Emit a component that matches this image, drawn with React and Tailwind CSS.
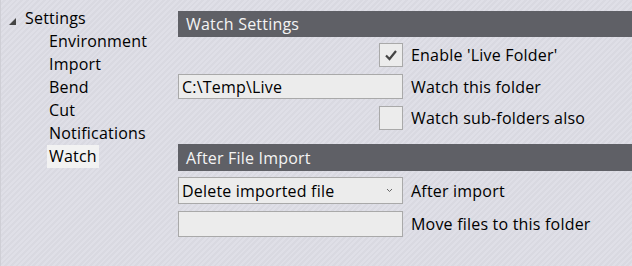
import React, { useState } from "react";

const treeItems = ["Environment", "Import", "Bend", "Cut", "Notifications", "Watch"];

const Checkbox = ({ checked, onToggle }) => (
  <button
    type="button"
    onClick={onToggle}
    className="w-[24px] h-[24px] bg-[#ececec] border border-[#a9a9a9] flex items-center justify-center"
  >
    {checked && (
      <svg width="14" height="12" viewBox="0 0 14 12">
        <path d="M2 6.5 L5.5 10 L12 2" fill="none" stroke="#444" strokeWidth="2.2" />
      </svg>
    )}
  </button>
);

const SectionHeader = ({ title, className = "" }) => (
  <div className={`bg-[#5f6066] text-[#f4f4f4] pl-[8px] flex items-center ${className}`}>
    {title}
  </div>
);

const App = () => {
  const [live, setLive] = useState(true);
  const [subFolders, setSubFolders] = useState(false);
  const [folder, setFolder] = useState("C:\\Temp\\Live");
  const [moveTo, setMoveTo] = useState("");

  return (
    <div
      className="w-[632px] h-[266px] flex text-[16px] tracking-[0.2px] text-black bg-[repeating-linear-gradient(135deg,#dfdfe7_0px,#dfdfe7_2px,#d9d9e1_2px,#d9d9e1_4px)] border-l border-[#cfcfd6]"
      style={{ fontFamily: '"Open Sans", "Noto Sans", sans-serif' }}
    >
      {/* Tree */}
      <div className="w-[177px] pt-[7px] leading-[23px]">
        <div className="flex items-center">
          <svg width="24" height="23" viewBox="0 0 24 23" className="shrink-0">
            <polygon points="15,11 15,18 8,18" fill="#444" />
          </svg>
          <span>Settings</span>
        </div>
        <div className="pl-[46px] flex flex-col items-start">
          {treeItems.map((item) => (
            <span
              key={item}
              className={
                item === "Watch" ? "px-[2px] bg-[#f2f2f2]" : "px-[2px]"
              }
            >
              {item}
            </span>
          ))}
        </div>
      </div>

      {/* Panel */}
      <div className="flex-1 pt-[11px]">
        <SectionHeader title="Watch Settings" className="h-[26px]" />

        <div className="grid grid-cols-[225px_1fr] gap-x-[8px] items-center mt-[6px]">
          <div className="flex justify-end h-[24px]">
            <Checkbox checked={live} onToggle={() => setLive(!live)} />
          </div>
          <span>Enable 'Live Folder'</span>
        </div>

        <div className="grid grid-cols-[225px_1fr] gap-x-[8px] items-center mt-[7px]">
          <input
            value={folder}
            onChange={(e) => setFolder(e.target.value)}
            className="h-[25px] bg-[#ececec] border border-[#a9a9a9] px-[3px] outline-none"
          />
          <span>Watch this folder</span>
        </div>

        <div className="grid grid-cols-[225px_1fr] gap-x-[8px] items-center mt-[7px]">
          <div className="flex justify-end h-[24px]">
            <Checkbox checked={subFolders} onToggle={() => setSubFolders(!subFolders)} />
          </div>
          <span>Watch sub-folders also</span>
        </div>

        <SectionHeader title="After File Import" className="h-[27px] mt-[14px]" />

        <div className="grid grid-cols-[225px_1fr] gap-x-[8px] items-center mt-[6px]">
          <div className="h-[27px] bg-[#ececec] border border-[#a9a9a9] pl-[3px] pr-[9px] flex items-center justify-between">
            <span>Delete imported file</span>
            <svg width="7" height="5" viewBox="0 0 7 5">
              <path d="M1 1 L3.5 3.5 L6 1" fill="none" stroke="#666" strokeWidth="1" />
            </svg>
          </div>
          <span>After import</span>
        </div>

        <div className="grid grid-cols-[225px_1fr] gap-x-[8px] items-center mt-[7px]">
          <input
            value={moveTo}
            onChange={(e) => setMoveTo(e.target.value)}
            className="h-[26px] bg-[#ececec] border border-[#a9a9a9] px-[3px] outline-none"
          />
          <span>Move files to this folder</span>
        </div>
      </div>
    </div>
  );
};

export default App;
